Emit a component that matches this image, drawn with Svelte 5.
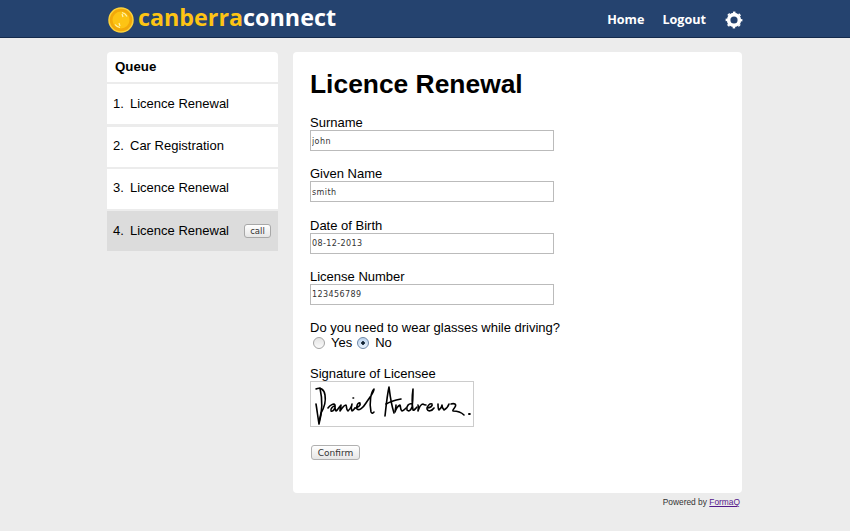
<script>
  const queue = [
    { name: "Licence Renewal" },
    { name: "Car Registration" },
    { name: "Licence Renewal" },
    { name: "Licence Renewal", active: true }
  ];
  const fields = [
    { label: "Surname", value: "john" },
    { label: "Given Name", value: "smith" },
    { label: "Date of Birth", value: "08-12-2013" },
    { label: "License Number", value: "123456789" }
  ];
</script>

<header class="topbar">
  <div class="topbar-inner">
    <a class="logo" href="#home">
      <svg class="logo-mark" viewBox="0 0 26 26" width="26" height="26">
        <circle cx="13" cy="13" r="12" fill="#f2a90a" stroke="#fcd23a" stroke-width="1.5" />
        <circle cx="13" cy="13" r="8.5" fill="#fdc414" />
        <path d="M14 5.5a7.5 7.5 0 0 1 5 4M12 20.5a7.5 7.5 0 0 1-5-3M15 10l-1-3M11 16l1 3" fill="none" stroke="#fff3b0" stroke-width="1.2" />
      </svg>
      <span class="logo-text"><span class="yellow">canberra</span>connect</span>
    </a>
    <nav class="nav">
      <a href="#home">Home</a>
      <a href="#logout">Logout</a>
      <svg class="gear" viewBox="0 0 18 18" width="18" height="18">
        <circle cx="9" cy="9" r="5.4" fill="none" stroke="#fff" stroke-width="3.6" />
        <circle cx="9" cy="9" r="7.6" fill="none" stroke="#fff" stroke-width="1.6" stroke-dasharray="2.6 3.37" stroke-dashoffset="1.3" />
      </svg>
    </nav>
  </div>
</header>

<div class="page">
  <aside class="queue">
    <h2>Queue</h2>
    <ol>
      {#each queue as item, i}
        <li class:active={item.active}>
          <span class="num">{i + 1}.</span>
          <span class="name">{item.name}</span>
          {#if item.active}
            <button class="call">call</button>
          {/if}
        </li>
      {/each}
    </ol>
  </aside>

  <div class="content">
    <main class="card">
      <h1>Licence Renewal</h1>
      {#each fields as field}
        <div class="field">
          <label for={field.label}>{field.label}</label>
          <input id={field.label} type="text" value={field.value} />
        </div>
      {/each}

      <div class="question">
        <div class="q-label">Do you need to wear glasses while driving?</div>
        <div class="radios">
          <input type="radio" name="glasses" id="yes" />
          <label for="yes">Yes</label>
          <input type="radio" name="glasses" id="no" checked />
          <label for="no">No</label>
        </div>
      </div>

      <div class="signature">
        <div class="sig-label">Signature of Licensee</div>
        <div class="sig-box">
          <svg viewBox="0 0 162 44" width="162" height="44">
            <g fill="none" stroke="#000" stroke-width="1.6" stroke-linecap="round" stroke-linejoin="round">
              <path d="M5 7c4-2 8 0 9 6c1 6-1 13-4 18l-2 9" />
              <path d="M9 6c2 9 3 22-1 36c-1-6-2-14-3-20" />
              <path d="M17 26c2-3 6-5 7-3c1 3-2 7-4 6c-1-2 2-5 4-5c0 2 0 4 1 5c2-1 3-4 5-6c0 2-1 4-1 6c2-3 4-6 6-6c1 2 0 5 2 6c1-1 2-2 3-4" />
              <path d="M41 22c-1 3-1 5 0 7c1 0 2-2 3-3M42 16h.6" />
              <path d="M44 26c3 0 6-3 5-5c-2-1-4 3-3 6c2 2 6-1 9-6c3-5 8-10 8-14c-3 3-5 13-3 23c1 2 2 1 3 0" />
              <path d="M74 34c1-9 2-20 4-29c1 8 2 17 5 26" />
              <path d="M75 22c5-3 10-4 15-5" />
              <path d="M85 23c0 3-1 5-1 7c1-3 3-6 5-7c1 2 0 5 2 6c1 0 3-2 4-3" />
              <path d="M101 22c-3-1-6 2-5 6c2 2 4 0 5-3c1-6 1-12 1-18c-1 7-1 15 0 21c1 1 2-1 4-3" />
              <path d="M107 23c1 2 0 4 0 6c1-3 3-7 5-7c1 1 2 1 3 1" />
              <path d="M116 26c3 0 6-2 5-4c-2-1-5 2-5 5c1 3 5 2 7-1" />
              <path d="M127 22c0 3 0 5 1 6c1-1 3-3 3-5c0 2 1 4 2 5c2-1 4-3 5-6" />
              <path d="M140 22c3-1 6 0 4 3c-1 2-3 3-2 4c4 0 8 1 11 4" />
              <path d="M158 32h.8" stroke-width="2" />
            </g>
          </svg>
        </div>
      </div>

      <button class="confirm">Confirm</button>
    </main>
    <p class="powered">Powered by <a href="#formaq">FormaQ</a></p>
  </div>
</div>

<style>
  :global(body) {
    background: #ececec;
    font-family: "Liberation Sans", Arial, sans-serif;
    color: #000;
    font-size: 13px;
  }

  .topbar {
    height: 37px;
    background: #25436f;
    border-bottom: 1px solid #142a4c;
  }

  .topbar-inner {
    width: 635px;
    margin-left: 107px;
    height: 37px;
    display: flex;
    justify-content: space-between;
    align-items: center;
  }

  .logo {
    display: flex;
    align-items: center;
    gap: 4px;
    text-decoration: none;
    margin-left: 1px;
    padding-top: 2px;
  }

  .logo-text {
    font-family: "Open Sans", sans-serif;
    font-weight: 700;
    font-size: 23.3px;
    color: #fff;
    line-height: 37px;
    position: relative;
    top: -2px;
  }

  .yellow {
    color: #fdc414;
  }

  .nav {
    display: flex;
    align-items: center;
    gap: 18px;
    margin-right: -1px;
    padding-top: 2px;
  }

  .nav a {
    font-family: "Open Sans", sans-serif;
    font-weight: 700;
    font-size: 12.6px;
    color: #fff;
    text-decoration: none;
  }

  .gear {
    margin-left: 1px;
  }

  .page {
    width: 635px;
    margin: 14px 0 0 107px;
    display: flex;
    align-items: flex-start;
    gap: 15px;
  }

  .queue {
    width: 171px;
    flex: none;
  }

  .queue h2 {
    margin: 0;
    height: 30px;
    line-height: 29px;
    padding-left: 8px;
    font-size: 13.3px;
    font-weight: bold;
    background: #fff;
    border-radius: 4px 4px 0 0;
  }

  .queue ol {
    margin: 0;
    padding: 0;
    list-style: none;
  }

  .queue li {
    height: 40px;
    box-sizing: border-box;
    margin-top: 2.3px;
    padding: 0 0 2px 6px;
    background: #fff;
    display: flex;
    align-items: center;
    font-size: 13px;
  }

  .queue li.active {
    background: #dcdcdc;
    padding-bottom: 1px;
  }

  .num {
    width: 17px;
  }

  .call {
    margin-left: auto;
    margin-right: 7px;
    height: 14px;
    width: 27px;
    padding: 0;
    font-family: "DejaVu Sans", sans-serif;
    font-size: 8.5px;
    line-height: 12px;
    color: #333;
    background: linear-gradient(#fff, #e6e6e6);
    border: 1px solid #a8a8a8;
    border-radius: 3px;
  }

  .content {
    width: 449px;
  }

  .card {
    height: 441px;
    box-sizing: border-box;
    background: #fff;
    border-radius: 4px;
    padding: 16px 17px 0;
  }

  h1 {
    margin: 0 0 15px;
    font-size: 26.4px;
    line-height: 32px;
    font-weight: bold;
  }

  .field {
    margin-bottom: 15.3px;
  }

  .field label {
    display: block;
    line-height: 15px;
  }

  .field input {
    display: block;
    box-sizing: border-box;
    width: 244px;
    height: 21px;
    padding: 1px 1px 0;
    border: 1px solid #bbb;
    border-radius: 0;
    font-family: "DejaVu Sans", sans-serif;
    font-size: 8px;
    letter-spacing: 0.4px;
    color: #333;
    background: #fff;
    outline: none;
  }

  .question {
    margin-top: 12.7px;
  }

  .q-label {
    line-height: 15px;
  }

  .radios {
    display: flex;
    align-items: center;
    height: 15px;
    padding-left: 3px;
  }

  .radios input {
    appearance: none;
    box-sizing: border-box;
    margin: 0 6px 0 0;
    width: 12px;
    height: 12px;
    border: 1px solid #a4a4a4;
    border-radius: 50%;
    background: linear-gradient(#e4e4e4, #fafafa);
  }

  .radios input:checked {
    border-color: #6d87a8;
    background: radial-gradient(circle, #123 0 1.5px, transparent 2px), linear-gradient(#bcd3ee, #e8f1fb);
  }

  .radios label {
    margin-right: 5px;
  }

  .signature {
    margin-top: 16px;
  }

  .sig-label {
    line-height: 15px;
  }

  .sig-box {
    box-sizing: border-box;
    width: 164px;
    height: 46px;
    border: 1px solid #ccc;
  }

  .sig-box svg {
    display: block;
  }

  .confirm {
    display: block;
    margin: 18px 0 0 1px;
    width: 49px;
    height: 15px;
    padding: 0;
    font-family: "DejaVu Sans", sans-serif;
    font-size: 9px;
    color: #333;
    background: linear-gradient(#fff, #e6e6e6);
    border: 1px solid #b0b0b0;
    border-radius: 3px;
  }

  .powered {
    margin: 4px 2px 0 0;
    text-align: right;
    font-size: 8.4px;
    line-height: 10px;
    color: #333;
  }

  .powered a {
    color: #551a8b;
  }
</style>
